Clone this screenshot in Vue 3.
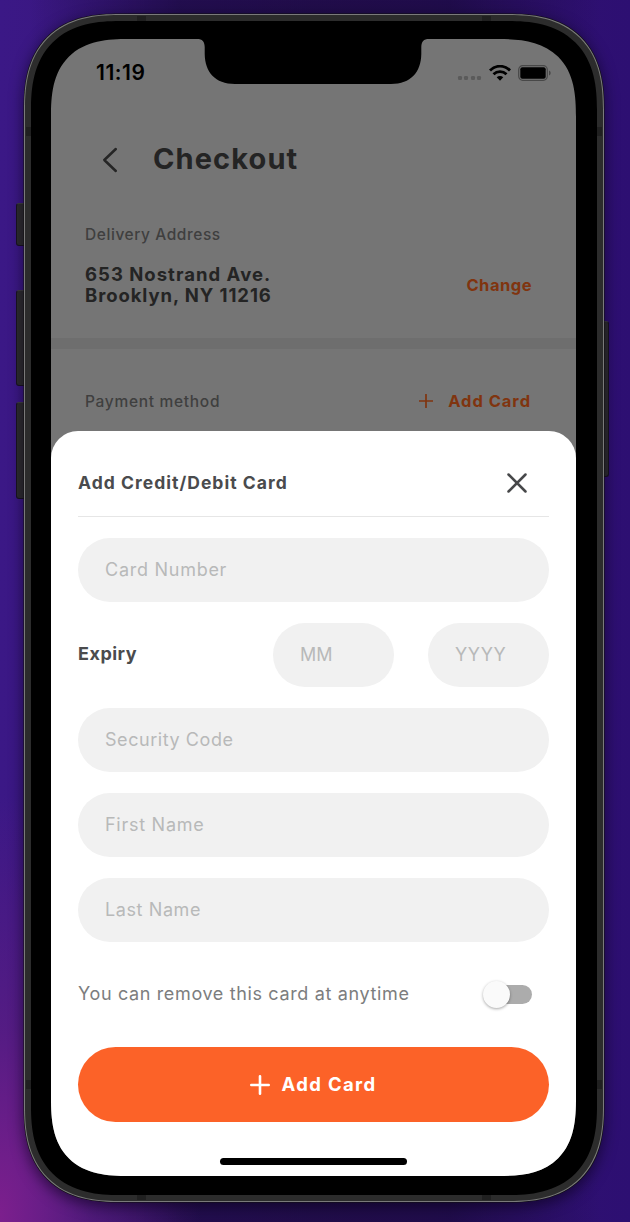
<script setup>
import { ref } from 'vue'

const fields = [
  { id: 'code', label: 'Security Code', cls: 'f-code' },
  { id: 'first', label: 'First Name', cls: 'f-first' },
  { id: 'last', label: 'Last Name', cls: 'f-last' },
]
const removable = ref(false)
</script>

<template>
  <div class="stage">
    <span class="side mute"></span>
    <span class="side vol-up"></span>
    <span class="side vol-down"></span>
    <span class="side power"></span>
    <div class="phone">
      <i class="band b1"></i><i class="band b2"></i><i class="band b3"></i><i class="band b4"></i>
      <i class="band h1"></i><i class="band h2"></i><i class="band h3"></i><i class="band h4"></i>
      <div class="bezel">
        <div class="screen">
          <svg class="notch" width="236" height="46" viewBox="0 0 236 46">
            <path d="M0 0H2C7.500 0 9.500 2.500 9.700 8V15C10 33 20 45 40 45H196C216 45 226 33 226.300 15V8C226.500 2.500 228.500 0 234 0H236Z" fill="#000" />
          </svg>
          <header class="status">
            <span class="time">11:19</span>
            <span class="indicators">
              <i class="dots"><b></b><b></b><b></b><b></b></i>
              <svg class="wifi" width="22" height="16" viewBox="0 0 22 16">
                <g fill="none" stroke="#000" stroke-width="2.800">
                  <path d="M1 5.400C6.800-.2 15.200-.2 21 5.400" />
                  <path d="M4.500 9.300C8.200 5.800 13.800 5.800 17.500 9.300" />
                </g>
                <path d="M7.700 12.300C9.600 10.500 12.400 10.500 14.300 12.300L11 15.700Z" fill="#000" />
              </svg>
              <svg class="battery" width="34" height="16" viewBox="0 0 34 16">
                <rect x=".7" y=".7" width="28.600" height="14.600" rx="4" fill="none" stroke="#484848" stroke-width="1.200" />
                <rect x="2.300" y="2.300" width="25.400" height="11.400" rx="2" fill="#000" />
                <path d="M31 5.500C33.200 6.200 33.200 9.800 31 10.500Z" fill="#484848" />
              </svg>
            </span>
          </header>
          <div class="title-row">
            <svg width="16" height="26" viewBox="0 0 16 26"><path d="M13.800 2L2.300 13L13.800 24" fill="none" stroke="#252525" stroke-width="2.500" stroke-linecap="round" stroke-linejoin="round" /></svg>
            <h1>Checkout</h1>
          </div>
          <section class="delivery">
            <span class="caption c-delivery">Delivery Address</span>
            <div class="addr-row">
              <p class="address"><span class="a1">653 Nostrand Ave.</span><br><span class="a2">Brooklyn, NY 11216</span></p>
              <a class="change">Change</a>
            </div>
          </section>
          <div class="divider"></div>
          <section class="payment">
            <span class="caption c-payment">Payment method</span>
            <a class="add">
              <svg width="14" height="14" viewBox="0 0 14 14"><path d="M7 .5V13.500M.5 7H13.500" stroke="#80340f" stroke-width="1.700" stroke-linecap="round" /></svg>
              <span>Add Card</span>
            </a>
          </section>
          <main class="sheet">
            <div class="sheet-head">
              <h2>Add Credit/Debit Card</h2>
              <svg width="20" height="20" viewBox="0 0 20 20"><path d="M1.500 1.500L18.500 18.500M18.500 1.500L1.500 18.500" stroke="#47484a" stroke-width="2.500" stroke-linecap="round" /></svg>
            </div>
            <form class="form">
              <input class="f-card" placeholder="Card Number">
              <div class="expiry">
                <span>Expiry</span>
                <input class="short f-mm" placeholder="MM">
                <input class="short f-yy" placeholder="YYYY">
              </div>
              <input v-for="f in fields" :key="f.id" :class="f.cls" :placeholder="f.label">
            </form>
            <div class="remove">
              <span>You can remove this card at anytime</span>
              <button class="toggle" :class="{ on: removable }" @click="removable = !removable"><i></i></button>
            </div>
            <button class="submit">
              <svg width="20" height="20" viewBox="0 0 20 20"><path d="M10 1.300V18.700M1.300 10H18.700" stroke="#fff" stroke-width="2.600" stroke-linecap="round" /></svg>
              <span>Add Card</span>
            </button>
            <div class="home"></div>
          </main>
        </div>
      </div>
    </div>
  </div>
</template>

<style>
body { margin: 0; overflow: hidden; }
</style>

<style scoped>
* { box-sizing: border-box; }
.stage {
  position: relative;
  width: 630px;
  height: 1222px;
  padding: 14px 26px 20px 24px;
  overflow: hidden;
  font-family: Inter, "Liberation Sans", sans-serif;
  background:
    radial-gradient(ellipse 200px 420px at 0 1215px, #7c1f8d 0%, rgba(100, 30, 130, .6) 45%, transparent 100%),
    linear-gradient(90deg, transparent 30px, rgba(20, 8, 50, .6) 180px, rgba(20, 8, 50, .6) 450px, transparent 600px),
    linear-gradient(90deg, #3b1886 0%, #35146f 50%, #2d0f72 100%);
}
.phone {
  position: relative;
  width: 580px;
  height: 1188px;
  padding: 6px;
  border-radius: 82px;
  background: #2c2c2c;
  border: 1px solid #7a7a7a;
  box-shadow: 0 0 0 .5px #111, 0 4px 14px 1px rgba(10, 0, 25, .6);
}
.bezel {
  height: 100%;
  padding: 18px 20px 19px;
  border-radius: 76px;
  background: #000;
}
.band { position: absolute; background: #202020; }
.b1, .b2, .b3, .b4 { width: 5px; height: 9px; }
.b1, .b2 { left: 1px; }
.b3, .b4 { right: 1px; }
.b1, .b3 { top: 112px; }
.b2, .b4 { bottom: 112px; }
.h1, .h2, .h3, .h4 { width: 9px; height: 5px; }
.h1, .h3 { left: 112px; }
.h2, .h4 { right: 112px; }
.h1, .h2 { top: 1px; }
.h3, .h4 { bottom: 1px; }
.side {
  position: absolute;
  left: 16px;
  width: 9px;
  background: #2e2e2e;
  border: 1px solid #191320;
  border-top-color: #404040;
  border-radius: 3px 0 0 3px;
}
.mute { top: 203px; height: 43px; }
.vol-up { top: 290px; height: 96px; }
.vol-down { top: 402px; height: 97px; }
.power { left: 602px; width: 7px; top: 321px; height: 156px; border-radius: 0 3px 3px 0; }
.screen {
  position: relative;
  display: flex;
  flex-direction: column;
  width: 525px;
  height: 1137px;
  border-radius: 64px;
  overflow: hidden;
  background: #757575;
}
@supports (corner-shape: superellipse(1.4)) {
  .phone { border-radius: 96px; corner-shape: superellipse(1.32); }
  .bezel { border-radius: 89px; corner-shape: superellipse(1.32); }
  .screen { border-radius: 78px; corner-shape: superellipse(1.42); }
}
.notch { position: absolute; top: 0; left: 144px; }
.status {
  display: flex;
  justify-content: space-between;
  align-items: center;
  height: 67px;
  padding: 0 24px 0 45px;
}
.time { font-size: 21px; font-weight: 600; letter-spacing: .55px; color: #000; }
.indicators { display: flex; align-items: center; }
.dots { display: flex; gap: 2.300px; margin: 11px 8px 0 0; }
.dots b { width: 4px; height: 4px; border-radius: 1.300px; background: #5b5b5b; }
.wifi { margin-right: 7px; }
.title-row {
  display: flex;
  align-items: center;
  gap: 35px;
  height: 108px;
  padding: 0 0 0 51px;
}
h1 { margin: -3px 0 0; font-size: 29px; font-weight: 750; line-height: 36px; letter-spacing: 1.1px; color: #242424; }
.delivery { height: 124px; padding: 11px 44px 0 34px; }
.caption { display: block; font-size: 15.5px; line-height: 20px; font-weight: 500; color: #3f3f3f; }
.c-delivery { letter-spacing: .57px; }
.c-payment { letter-spacing: .7px; padding-top: 1px; }
.addr-row { display: flex; justify-content: space-between; align-items: center; margin-top: 19px; }
.address { margin: 0; font-size: 18.5px; line-height: 20.5px; font-weight: 700; color: #242424; }
.a1 { letter-spacing: 1.02px; }
.a2 { letter-spacing: .92px; }
.change, .add span { font-size: 16.5px; font-weight: 700; color: #80340f; }
.change { letter-spacing: .5px; }
.add span { letter-spacing: .95px; }
.divider { height: 11px; background: #6e6e6e; }
.payment { display: flex; justify-content: space-between; align-items: center; height: 104px; margin-bottom: -22px; padding: 0 45px 0 34px; }
.add { display: flex; align-items: center; gap: 15px; }
.sheet {
  flex: 1;
  padding: 0 27px;
  border-radius: 27px 27px 0 0;
  background: #fff;
}
.sheet-head {
  display: flex;
  justify-content: space-between;
  align-items: center;
  height: 86px;
  padding: 19px 22px 0 0;
  border-bottom: 1px solid #e6e6e6;
}
h2 { margin: -2px 0 0; font-size: 17.5px; font-weight: 700; letter-spacing: 1.03px; color: #4a4b4d; }
.form { display: flex; flex-direction: column; gap: 21px; padding-top: 21px; }
input {
  width: 100%;
  height: 64px;
  padding: 0 27px 2px;
  border: 0;
  border-radius: 32px;
  background: #f1f1f1;
  font-family: inherit;
  font-size: 18px;
  letter-spacing: .73px;
  outline: none;
}
input::placeholder { color: #b8b9b9; opacity: 1; }
.f-mm { letter-spacing: 0; }
.f-yy { letter-spacing: .6px; }
.f-code { letter-spacing: .56px; }
.f-last { letter-spacing: .6px; }
.expiry { display: flex; align-items: center; gap: 34px; }
.expiry span { flex: 1; padding-bottom: 4px; font-size: 18px; font-weight: 700; letter-spacing: .5px; color: #4a4b4d; }
.short { width: 121px; }
.remove { display: flex; justify-content: space-between; align-items: center; height: 105px; padding-right: 17px; }
.remove span { padding-bottom: 2px; font-size: 18px; letter-spacing: .64px; color: #7c7d7e; }
.toggle { position: relative; width: 48px; height: 19px; padding: 0; border: 0; border-radius: 10px; background: #acacac; }
.toggle i {
  position: absolute;
  left: -1px;
  top: -4px;
  width: 27px;
  height: 27px;
  border-radius: 50%;
  background: #fafafa;
  box-shadow: 0 1px 3px rgba(0, 0, 0, .35);
}
.toggle.on i { left: 22px; }
.submit {
  display: flex;
  justify-content: center;
  align-items: center;
  gap: 11px;
  width: 100%;
  height: 75px;
  border: 0;
  border-radius: 38px;
  background: #fc6228;
  font: 700 18.5px Inter, "Liberation Sans", sans-serif;
  letter-spacing: 1.35px;
  color: #fff;
}
.submit span { padding-bottom: 1px; }
.home { width: 187px; height: 7px; margin: 36px auto 0; border-radius: 4px; background: #000; }
</style>
